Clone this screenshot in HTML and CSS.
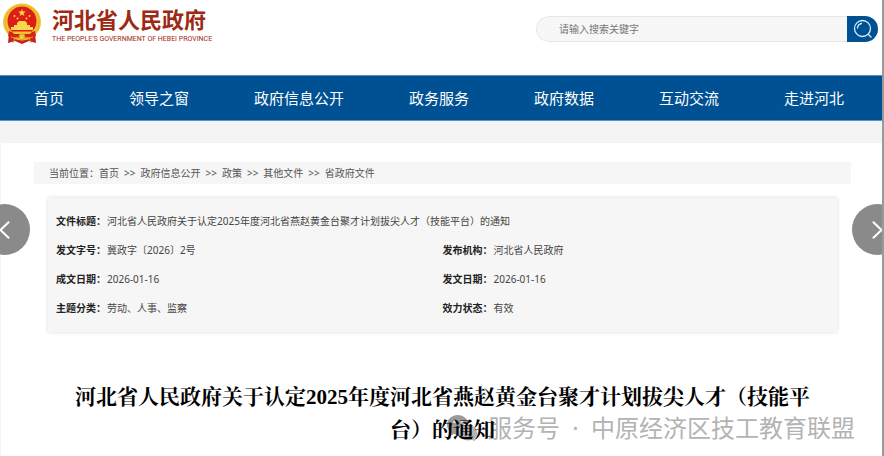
FILE: index.html
```html
<!DOCTYPE html>
<html lang="zh-CN">
<head>
<meta charset="utf-8">
<title>河北省人民政府</title>
<link rel="stylesheet" href="styles.css">
</head>
<body>
<div class="page">
  <header class="header">
    <a class="brand" href="#">
      <svg class="emblem" viewBox="0 0 40 42" aria-hidden="true">
        <path d="M7 30 L6 40 L13 38 L20 41 L27 38 L34 40 L33 30Z" fill="#c9211c"/>
        <ellipse cx="20" cy="19" rx="19" ry="18.500" fill="#f3c433"/>
        <ellipse cx="20" cy="19" rx="17" ry="16.500" fill="none" stroke="#e0a224" stroke-width="1" stroke-dasharray="2 1"/>
        <circle cx="20" cy="18" r="14.500" fill="#dd1e16"/>
        <path d="M20 6l1 2.600h2.800l-2.200 1.800.800 2.600-2.400-1.600-2.400 1.600.800-2.600-2.200-1.800h2.800z" fill="#f8d84a"/>
        <g fill="#f8d84a"><circle cx="12.500" cy="13" r="1"/><circle cx="15.500" cy="15.500" r="1"/><circle cx="24.500" cy="15.500" r="1"/><circle cx="27.500" cy="13" r="1"/>
        <path d="M15 20l2-2h6l2 2v2h3v2h3v3H9v-3h3v-2h3z"/></g>
        <path d="M7 28q13 6 26 0l1 5q-5 3-9 1l-5 3-5-3q-4 2-9-1z" fill="#d3231b"/>
        <path d="M10 28.500h20l-2 2.500H12z" fill="#f3c433"/>
        <circle cx="20" cy="34" r="3" fill="#f3c433" stroke="#dfa323"/>
        <path d="M9 34l4 1-2 5M31 34l-4 1 2 5" fill="none" stroke="#e59a2b" stroke-width="1"/>
      </svg>
      <span class="brand-text">
        <span class="brand-name">河北省人民政府</span>
        <span class="brand-sub">THE PEOPLE'S GOVERNMENT OF HEBEI PROVINCE</span>
      </span>
    </a>
    <form class="search">
      <input class="search-input" type="text" aria-label="搜索" placeholder="请输入搜索关键字">
      <button class="search-button" type="button" aria-label="搜索">
        <svg class="search-icon" viewBox="0 0 20 20" fill="none" stroke="#d9ecfb" stroke-width="1.300" stroke-linecap="round" aria-hidden="true">
          <circle cx="9.500" cy="9.500" r="8"/><path d="M15.500 15.500L18 18M4.500 9a5 5 0 0 1 4-4.500"/>
        </svg>
      </button>
    </form>
  </header>
  <nav class="nav">
    <a href="#">首页</a>
    <a href="#">领导之窗</a>
    <a href="#">政府信息公开</a>
    <a href="#">政务服务</a>
    <a href="#">政府数据</a>
    <a href="#">互动交流</a>
    <a href="#">走进河北</a>
  </nav>
  <main class="main">
    <div class="breadcrumb">
      <span>当前位置：</span><a href="#">首页</a><span class="sep">&gt;&gt;</span><a href="#">政府信息公开</a><span class="sep">&gt;&gt;</span><a href="#">政策</a><span class="sep">&gt;&gt;</span><a href="#">其他文件</a><span class="sep">&gt;&gt;</span><a href="#">省政府文件</a>
    </div>
    <dl class="meta">
      <div class="meta-item meta-wide"><dt>文件标题：</dt><dd>河北省人民政府关于认定2025年度河北省燕赵黄金台聚才计划拔尖人才（技能平台）的通知</dd></div>
      <div class="meta-item"><dt>发文字号：</dt><dd>冀政字〔2026〕2号</dd></div>
      <div class="meta-item"><dt>发布机构：</dt><dd>河北省人民政府</dd></div>
      <div class="meta-item"><dt>成文日期：</dt><dd>2026-01-16</dd></div>
      <div class="meta-item"><dt>发文日期：</dt><dd>2026-01-16</dd></div>
      <div class="meta-item"><dt>主题分类：</dt><dd>劳动、人事、监察</dd></div>
      <div class="meta-item"><dt>效力状态：</dt><dd>有效</dd></div>
    </dl>
    <h1 class="title">河北省人民政府关于认定2025年度河北省燕赵黄金台聚才计划拔尖人才（技能平台）的通知</h1>
  </main>
  <button class="arrow arrow-prev" type="button" aria-label="上一张">
    <svg viewBox="0 0 50 50" fill="none" stroke="#fff" stroke-width="2" stroke-linecap="round" stroke-linejoin="round"><path d="M29 18l-8 7.500 8 7.500"/></svg>
  </button>
  <button class="arrow arrow-next" type="button" aria-label="下一张">
    <svg viewBox="0 0 50 50" fill="none" stroke="#fff" stroke-width="2" stroke-linecap="round" stroke-linejoin="round"><path d="M21 18l8 7.500-8 7.500"/></svg>
  </button>
  <div class="watermark">
    <svg class="watermark-icon" viewBox="0 0 32 28" aria-hidden="true">
      <path d="M12 1C5.500 1 1 5.500 1 11c0 3 1.500 5.500 4 7.500L4 22l4-2q2 1 5 1c-2-7 4-12 10-11C22 5 17 1 12 1z" fill="#999"/>
      <path d="M22 11c-5 0-9 3.500-9 8s4 7.500 9 7.500q2 0 4-.700l3 1.700-.700-3c2-1.500 3-3.500 3-5.500 0-4.500-4-8-9.300-8z" fill="#b5b5b5"/>
      <g fill="#fff" opacity=".7"><circle cx="8.500" cy="8" r="1.300"/><circle cx="16" cy="8" r="1.300"/><circle cx="19" cy="17" r="1"/><circle cx="25" cy="17" r="1"/></g>
    </svg>
    <span>服务号<span class="watermark-dot"> · </span>中原经济区技工教育联盟</span>
  </div>
</div>
</body>
</html>
```

FILE: styles.css
```css
* {
  box-sizing: border-box;
}

body {
  margin: 0;
  background: #fff;
  color: #444;
  font-family: "Noto Sans", "Noto Sans CJK SC", sans-serif;
  font-size: 10px;
}

a {
  color: inherit;
  text-decoration: none;
}

.page {
  position: relative;
  min-height: 100vh;
  overflow: hidden;
  border-right: 2px solid #999;
}

.header {
  display: flex;
  justify-content: space-between;
  height: 75px;
  padding: 3px 4px 0 2px;
}

.brand {
  display: flex;
  align-items: flex-start;
  gap: 10px;
  color: #9c2a14;
}

.emblem {
  width: 40px;
  height: 42px;
}

.brand-text {
  display: flex;
  flex-direction: column;
  gap: 4px;
  padding-top: 3px;
}

.brand-name {
  font-family: "Noto Sans CJK SC", sans-serif;
  font-size: 22px;
  font-weight: 700;
  line-height: 24px;
}

.brand-sub {
  font-family: Roboto, sans-serif;
  font-size: 7px;
  line-height: 10px;
  white-space: nowrap;
}

.search {
  display: flex;
  width: 342px;
  height: 26px;
  margin-top: 13px;
  border-radius: 13px;
  overflow: hidden;
}

.search-input {
  flex: 1;
  min-width: 0;
  padding: 0 22px;
  border: 1px solid #e6e6e6;
  border-right: 0;
  border-radius: 13px 0 0 13px;
  background: #f7f7f7;
  color: #444;
  font: inherit;
}

.search-input::placeholder {
  color: #757575;
}

.search-button {
  display: flex;
  align-items: center;
  justify-content: center;
  width: 31px;
  padding: 0;
  border: 0;
  background: #005193;
}

.search-icon {
  width: 20px;
  height: 20px;
}

.nav {
  display: flex;
  justify-content: space-between;
  height: 46px;
  padding: 0 38px 0 34px;
  border-top: 1px solid #5b93bf;
  border-bottom: 1px solid #5b93bf;
  background: #005193;
  color: #fff;
  font-family: "Noto Sans CJK SC", sans-serif;
  font-size: 15px;
  line-height: 44px;
  white-space: nowrap;
}

.main {
  padding: 19px 31px 10px 33px;
  border-top: 22px solid #f4f4f4;
  border-left: 1px solid #f4f4f4;
}

.breadcrumb {
  display: flex;
  padding: 0 15px;
  background: #f6f6f6;
  color: #555;
  line-height: 22px;
}

.sep {
  margin: 0 5px;
}

.meta {
  display: grid;
  grid-template-columns: 1fr 1fr;
  margin: 14px 14px 0;
  padding: 9px 8px;
  background: #f6f6f6;
  box-shadow: 0 0 4px #d8d8d8;
  line-height: 29px;
}

.meta-item {
  display: flex;
}

.meta-wide {
  grid-column: 1 / -1;
}

.meta dt {
  width: 51px;
  color: #222;
  font-weight: 700;
  white-space: nowrap;
}

.meta dd {
  margin: 0;
}

.title {
  position: relative;
  z-index: 1;
  max-width: 744px;
  margin: 49px auto 0;
  color: #000;
  font-family: "Liberation Serif", "Noto Serif CJK SC", "Noto Sans CJK SC", serif;
  font-size: 21px;
  font-weight: 700;
  line-height: 33px;
  text-align: center;
}

.arrow {
  position: absolute;
  top: 204px;
  z-index: 2;
  width: 51px;
  height: 51px;
  padding: 0;
  border: 0;
  border-radius: 50%;
  background: #8a8a8a;
}

.arrow svg {
  display: block;
}

.arrow-prev {
  left: -21px;
}

.arrow-next {
  right: -21px;
}

.watermark {
  position: absolute;
  right: 27px;
  bottom: 11px;
  display: flex;
  align-items: center;
  gap: 10px;
  color: #b3b3b3;
  font-family: "Noto Sans CJK SC", sans-serif;
  font-size: 24px;
  line-height: 36px;
  white-space: nowrap;
}

.watermark-dot {
  margin: 0 6px;
  font-family: "Noto Sans", sans-serif;
}

.watermark-icon {
  width: 32px;
  height: 28px;
}
```
